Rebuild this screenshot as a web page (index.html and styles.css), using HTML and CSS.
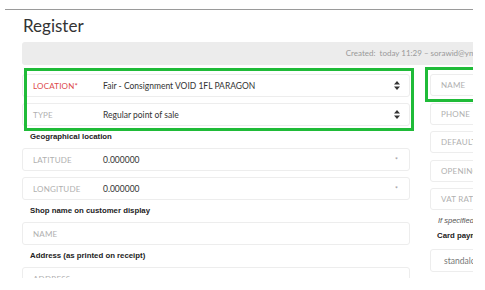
FILE: index.html
```html
<!DOCTYPE html>
<html lang="en">
<head>
  <meta charset="UTF-8" />
  <meta name="viewport" content="width=device-width, initial-scale=1.0">
  <title>Register</title>
  <link rel="stylesheet" href="styles.css">
</head>
<body>

  <div class="shot">
    <div class="page">
      <div class="topline"></div>
      <h1>Register</h1>

      <div class="meta">Created:&nbsp; today 11:29 &ndash; sorawid@ymail.com</div>

      <div class="form">
        <div class="col col-left">
          <div class="group">
            <div class="field">
              <span class="label required">LOCATION*</span>
              <span class="value">Fair - Consignment VOID 1FL PARAGON</span>
              <svg class="arrows" width="6" height="9" viewBox="0 0 6 9"><path d="M3 0L6 3.5H0z M3 9L0 5.5H6z" fill="#333"/></svg>
            </div>
            <div class="field">
              <span class="label">TYPE</span>
              <span class="value">Regular point of sale</span>
              <svg class="arrows" width="6" height="9" viewBox="0 0 6 9"><path d="M3 0L6 3.5H0z M3 9L0 5.5H6z" fill="#333"/></svg>
            </div>
          </div>

          <div class="heading">Geographical location</div>
          <div class="group">
            <div class="field">
              <span class="label">LATITUDE</span>
              <span class="value">0.000000</span>
              <span class="mark">*</span>
            </div>
            <div class="field">
              <span class="label">LONGITUDE</span>
              <span class="value">0.000000</span>
              <span class="mark">*</span>
            </div>
          </div>

          <div class="heading">Shop name on customer display</div>
          <div class="group">
            <div class="field"><span class="label">NAME</span></div>
          </div>

          <div class="heading">Address (as printed on receipt)</div>
          <div class="group">
            <div class="field"><span class="label">ADDRESS</span></div>
          </div>
        </div>

        <div class="col col-right">
          <div class="group group-right">
            <div class="field"><span class="label">NAME</span></div>
            <div class="field"><span class="label">PHONE</span></div>
            <div class="field"><span class="label">DEFAULT CURRENCY</span></div>
            <div class="field"><span class="label">OPENING HOURS</span></div>
            <div class="field"><span class="label">VAT RATE</span></div>
          </div>
          <div class="hint">If specified, this rate is used</div>
          <div class="heading heading-right">Card payment terminal</div>
          <div class="field field-plain"><span class="value muted">standalone</span></div>
        </div>
      </div>

      <div class="highlight highlight-left"></div>
      <div class="highlight highlight-right"></div>
    </div>
  </div>

</body>
</html>
```

FILE: styles.css
```css
body {
  margin: 0;
  background: #fff;
  font-family: 'Lato', 'Open Sans', sans-serif;
  color: #333;
}

.shot {
  width: 473px;
  height: 278px;
  overflow: hidden;
}

.page {
  position: relative;
  width: 510px;
  padding-top: 9px;
}

.topline {
  margin-left: 5px;
  border-top: 1px solid #9a9a9a;
}

h1 {
  margin: 5px 0 0 23px;
  font-size: 17px;
  font-weight: 400;
  line-height: 22px;
  color: #333;
}

.meta {
  margin: 5px 0 0 22px;
  height: 23px;
  line-height: 23px;
  background: #ececec;
  border-radius: 3px;
  font-size: 8px;
  color: #999;
  text-align: right;
  padding-right: 10px;
  white-space: nowrap;
}

.form {
  display: flex;
  gap: 20px;
  margin: 9px 0 0 22px;
}

.col {
  display: flex;
  flex-direction: column;
}

.col-left {
  width: 388px;
  flex-shrink: 0;
}

.col-right {
  flex: 1;
  min-width: 0;
}

.group {
  display: flex;
  flex-direction: column;
  gap: 6px;
}

.group-right {
  gap: 6.5px;
}

.group-right .field {
  height: 22px;
}

.field {
  display: flex;
  align-items: center;
  height: 23px;
  box-sizing: border-box;
  padding: 0 9px 0 10px;
  border: 1px solid #ededed;
  border-radius: 3px;
  background: #fff;
  font-size: 8.5px;
}

.label {
  width: 70px;
  flex-shrink: 0;
  font-size: 8px;
  color: #b0b0b0;
  letter-spacing: 0.2px;
  white-space: nowrap;
}

.label.required {
  color: #dd4a4a;
}

.value {
  flex: 1;
  color: #333;
  white-space: nowrap;
}

.value.muted {
  color: #777;
}

.arrows {
  flex-shrink: 0;
}

.mark {
  font-size: 7px;
  color: #999;
  padding-right: 2px;
}

.heading {
  height: 22px;
  line-height: 22px;
  padding-left: 8px;
  font-family: 'Liberation Sans', Arial, sans-serif;
  font-size: 7.8px;
  font-weight: 700;
  color: #222;
  white-space: nowrap;
}

.hint {
  margin-top: 4px;
  line-height: 14px;
  padding-left: 8px;
  font-family: 'Liberation Sans', Arial, sans-serif;
  font-size: 7.5px;
  font-style: italic;
  color: #555;
  white-space: nowrap;
}

.heading-right {
  height: 16px;
  line-height: 16px;
  padding-left: 7px;
}

.field-plain {
  margin-top: 5px;
  padding-left: 13px;
}

.highlight {
  position: absolute;
  border: 3px solid #1fbb38;
  box-sizing: border-box;
}

.highlight-left {
  left: 24px;
  top: 68px;
  width: 390px;
  height: 63px;
}

.highlight-right {
  left: 425px;
  top: 67px;
  width: 120px;
  height: 35px;
}
```
